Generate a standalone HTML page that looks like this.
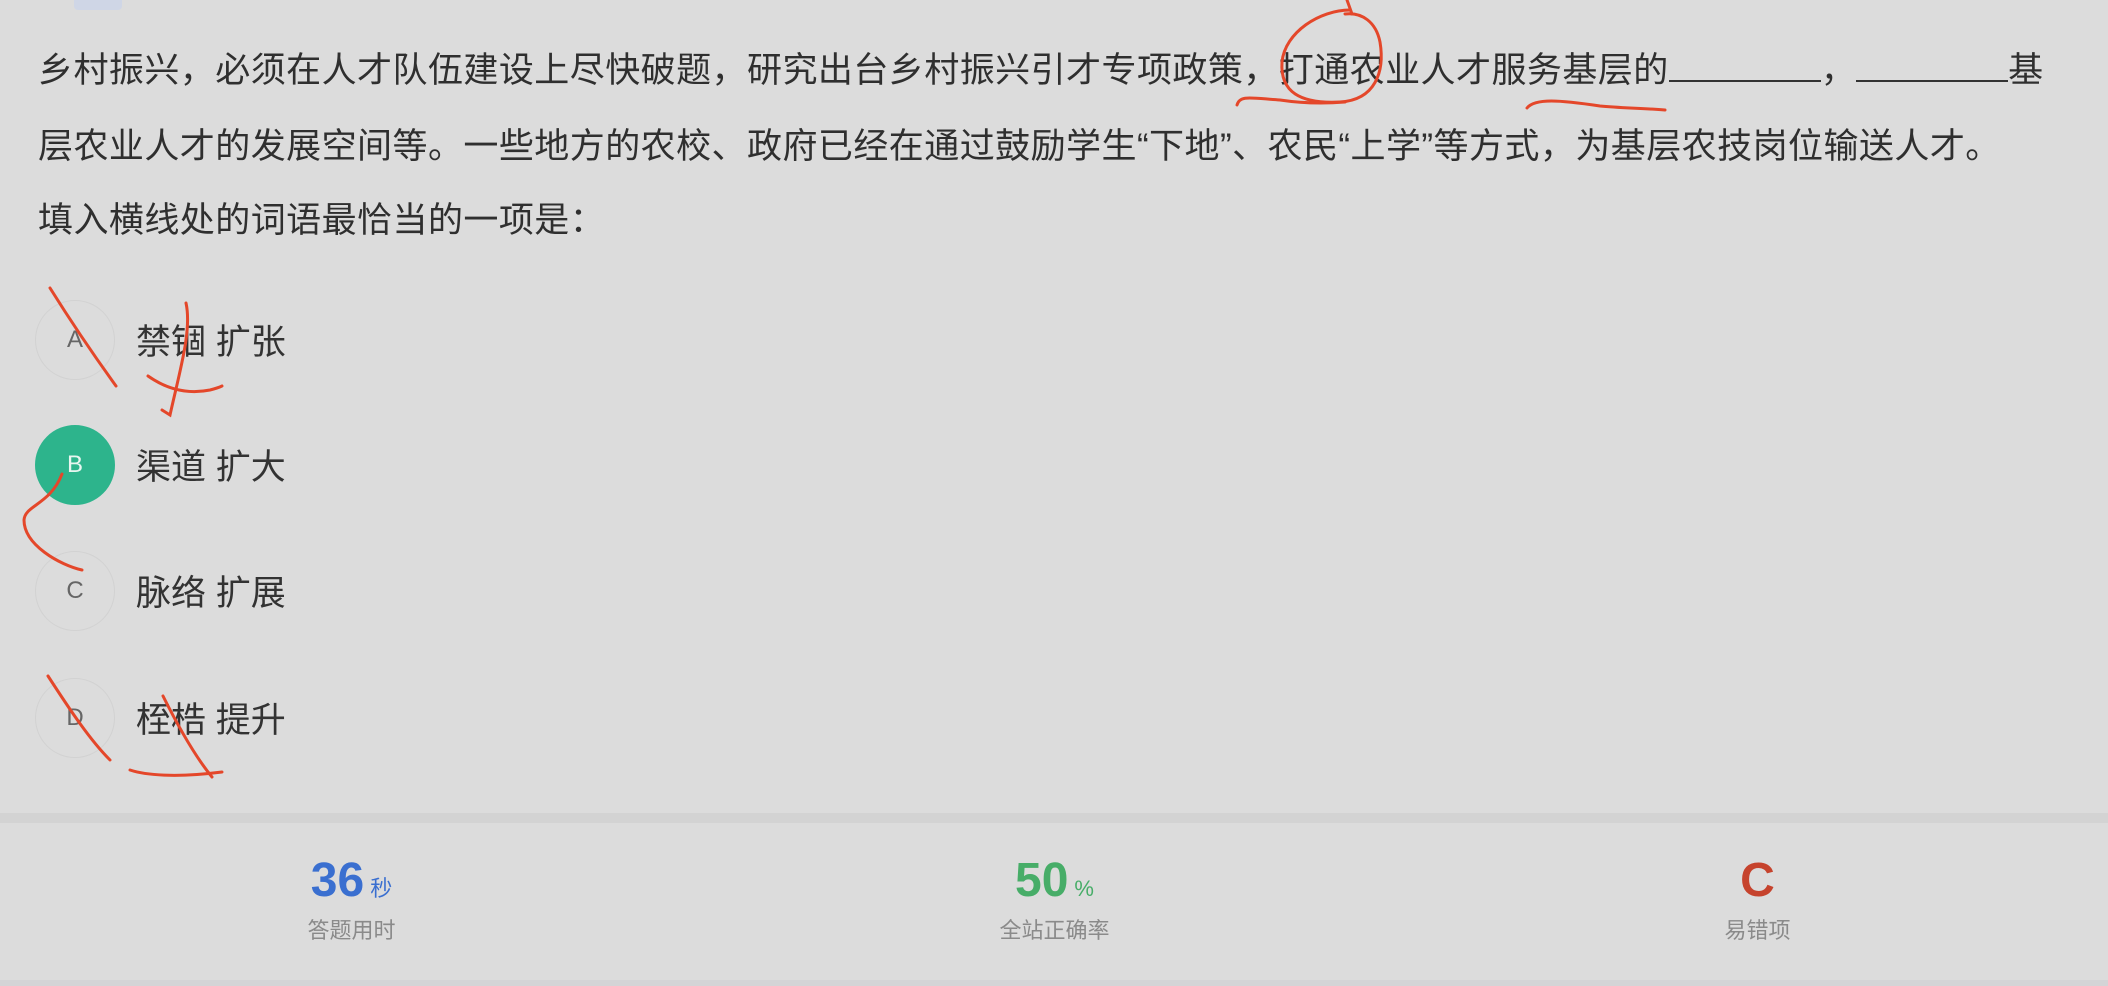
<!DOCTYPE html>
<html><head><meta charset="utf-8"><style>
html,body{margin:0;padding:0;width:2108px;height:986px;overflow:hidden;background:#dcdcdc;font-family:"Liberation Sans","Noto Sans CJK SC",sans-serif;position:relative;color:#2f2f2f}
.tag{position:absolute;left:74px;top:-14px;width:48px;height:24px;background:#cfd6e6;border-radius:4px}
.line{position:absolute;left:38px;font-size:35px;white-space:nowrap;line-height:40px;letter-spacing:0.45px}
.blank{display:inline-block;width:152px;border-bottom:2px solid #333;height:30px;vertical-align:baseline}
.opt{position:absolute;left:35px;width:80px;height:80px;border-radius:50%;border:1px solid #d2d2d2;box-sizing:border-box;text-align:center;line-height:78px;font-size:24px;color:#666}
.opt.sel{background:#2db48c;border-color:#2db48c;color:#e8f6f0}
.ot{position:absolute;left:136px;font-size:35px;line-height:40px;color:#333}
.band{position:absolute;left:0;top:813px;width:2108px;height:10px;background:#d3d3d3}
.stats{position:absolute;left:0;top:823px;width:2108px;height:157px;background:#dcdcdc}
.col{position:absolute;width:703px;text-align:center;top:0}
.num{position:absolute;top:30px;width:100%;font-size:48px;font-weight:bold;line-height:56px}
.num small{font-size:22px;font-weight:normal;margin-left:6px}
.lab{position:absolute;top:90px;width:100%;font-size:22px;color:#8a8a8a}
.bot{position:absolute;left:0;top:980px;width:2108px;height:6px;background:#d4d4d6}
</style></head><body>
<div class="tag"></div>
<div class="line" style="top:50px">乡村振兴，必须在人才队伍建设上尽快破题，研究出台乡村振兴引才专项政策，打通农业人才服务基层的<span class="blank"></span>，<span class="blank"></span>基</div>
<div class="line" style="top:127px">层农业人才的发展空间等。一些地方的农校、政府已经在通过鼓励学生“下地”、农民“上学”等方式，为基层农技岗位输送人才。</div>
<div class="line" style="top:201px">填入横线处的词语最恰当的一项是：</div>

<div class="opt" style="top:300px">A</div><div class="ot" style="top:323px">禁锢 扩张</div>
<div class="opt sel" style="top:425px">B</div><div class="ot" style="top:448px">渠道 扩大</div>
<div class="opt" style="top:551px">C</div><div class="ot" style="top:574px">脉络 扩展</div>
<div class="opt" style="top:678px">D</div><div class="ot" style="top:701px">桎梏 提升</div>

<div class="band"></div>
<div class="stats">
 <div class="col" style="left:0"><div class="num" style="color:#3a6fd0">36<small>秒</small></div><div class="lab">答题用时</div></div>
 <div class="col" style="left:703px"><div class="num" style="color:#47ad68">50<small>%</small></div><div class="lab">全站正确率</div></div>
 <div class="col" style="left:1406px"><div class="num" style="color:#c6432d">C</div><div class="lab">易错项</div></div>
</div>
<div class="bot"></div>

<svg width="2108" height="986" style="position:absolute;left:0;top:0" fill="none" stroke="#e4472a" stroke-width="3" stroke-linecap="round">
<path d="M1350 10 C1320 10 1285 32 1282 62 C1280 92 1300 104 1340 102 C1375 100 1385 72 1380 42 C1376 22 1362 12 1345 14"/>
<path d="M1237 105 C1240 95 1250 98 1280 100 C1300 103 1320 104 1345 102"/>
<path d="M1347 0 L1352 14"/>
<path d="M1527 108 C1535 98 1560 100 1600 106 C1620 108 1640 108 1665 110"/>
<path d="M50 288 C70 320 90 350 116 386"/>
<path d="M186 303 C192 330 180 370 170 415 L162 410"/>
<path d="M148 376 C165 388 185 395 210 390 C218 388 222 386 222 386"/>
<path d="M62 474 C50 505 25 505 24 520 C24 545 60 565 82 570"/>
<path d="M48 676 C70 710 90 740 110 760"/>
<path d="M163 696 C180 730 198 760 212 777"/>
<path d="M130 770 C145 775 175 778 222 772"/>
</svg>
</body></html>
